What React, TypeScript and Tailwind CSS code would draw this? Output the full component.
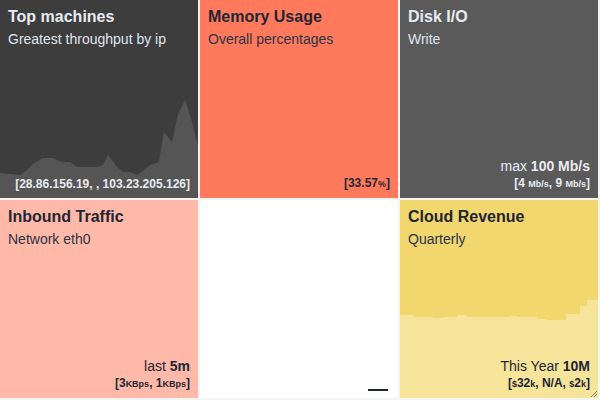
import React from 'react'

const font = { fontFamily: '"Liberation Sans", Arial, sans-serif' }

function Small({ children }: { children: React.ReactNode }) {
  return <span className="text-[9px]">{children}</span>
}

function TopChart() {
  const pts = [
    [0, 173], [20, 175], [27, 170], [33, 164], [43, 158], [53, 158], [62, 162], [70, 162],
    [77, 167], [97, 167], [103, 165], [108, 155], [117, 167], [123, 172], [130, 172],
    [137, 175], [143, 171], [150, 165], [157, 163], [159, 161], [164, 132], [172, 142],
    [178, 114], [185, 100], [192, 122], [198, 145],
  ]
  const d = 'M' + pts.map((p) => p.join(',')).join(' L') + ' L198,198 L0,198 Z'
  return (
    <svg className="absolute inset-0" width="198" height="198" viewBox="0 0 198 198">
      <path d={d} fill="#555555" />
    </svg>
  )
}

function RevenueChart() {
  const d =
    'M0,115 H13 V117 H33 V118 H43 V117 H57 V115 H67 V117 H110 V116 H117 V117 H137 V119 H147 V120 H166 V114 H180 V106 H187 V100 H198 V198 H0 Z'
  return (
    <svg className="absolute inset-0" width="198" height="198" viewBox="0 0 198 198">
      <path d={d} fill="#f6e49b" />
    </svg>
  )
}

function Tile({
  bg,
  title,
  sub,
  dark,
  chart,
  children,
}: {
  bg: string
  title: string
  sub: string
  dark?: boolean
  chart?: React.ReactNode
  children?: React.ReactNode
}) {
  return (
    <div className={`relative flex flex-col overflow-hidden px-2 pt-[5px] pb-[6px] ${bg}`}>
      {chart}
      <div className={`relative text-base leading-6 font-bold ${dark ? 'text-[#e8ebf2]' : 'text-[#1f2533]'}`}>
        {title}
      </div>
      <div className={`relative text-sm leading-5 ${dark ? 'text-[#dfe4ef]' : 'text-[#2c3344]'}`}>{sub}</div>
      <div className={`relative mt-auto flex flex-col items-end ${dark ? 'text-[#e8ebf2]' : 'text-[#1f2533]'}`}>
        {children}
      </div>
    </div>
  )
}

export default function App() {
  return (
    <div
      className="grid h-[400px] w-[600px] grid-cols-[198px_198px_198px] grid-rows-[198px_198px] gap-[2px] bg-[#f4f4f4]"
      style={font}
    >
      <Tile bg="bg-[#3d3d3d]" title="Top machines" sub="Greatest throughput by ip" dark chart={<TopChart />}>
        <div className="text-xs leading-4 font-bold">[28.86.156.19, , 103.23.205.126]</div>
      </Tile>
      <Tile bg="bg-[#ff7a5c]" title="Memory Usage" sub="Overall percentages">
        <div className="text-xs leading-4 font-bold">
          [33.57<Small>%</Small>]
        </div>
      </Tile>
      <Tile bg="bg-[#5a5a5a]" title="Disk I/O" sub="Write" dark>
        <div className="text-sm leading-[18px]">
          max <span className="font-bold">100 Mb/s</span>
        </div>
        <div className="text-xs leading-4 font-bold">
          [4 <Small>Mb/s</Small>, 9 <Small>Mb/s</Small>]
        </div>
      </Tile>
      <Tile bg="bg-[#ffb9a9]" title="Inbound Traffic" sub="Network eth0">
        <div className="text-sm leading-[18px]">
          last <span className="font-bold">5m</span>
        </div>
        <div className="text-xs leading-4 font-bold">
          [3<Small>KBps</Small>, 1<Small>KBps</Small>]
        </div>
      </Tile>
      <div className="flex items-end justify-end bg-white pr-[10px] pb-[7px]">
        <div className="h-[2px] w-[20px] bg-[#1f2533]" />
      </div>
      <div className="relative flex flex-col overflow-hidden bg-[#f1d76e] px-2 pt-[5px] pb-[6px]">
        <RevenueChart />
        <div className="relative text-base leading-6 font-bold text-[#1f2533]">Cloud Revenue</div>
        <div className="relative text-sm leading-5 text-[#2c3344]">Quarterly</div>
        <div className="relative mt-auto flex flex-col items-end text-[#1f2533]">
          <div className="text-sm leading-[18px]">
            This Year <span className="font-bold">10M</span>
          </div>
          <div className="text-xs leading-4 font-bold">
            [<Small>$</Small>32<Small>k</Small>, N/A, <Small>$</Small>2<Small>k</Small>]
          </div>
        </div>
        <svg className="absolute right-0 bottom-0" width="8" height="8" viewBox="0 0 8 8">
          <path d="M1,7 L7,1 M4,7 L7,4" stroke="#6b6b6b" strokeWidth="0.8" />
        </svg>
      </div>
    </div>
  )
}
